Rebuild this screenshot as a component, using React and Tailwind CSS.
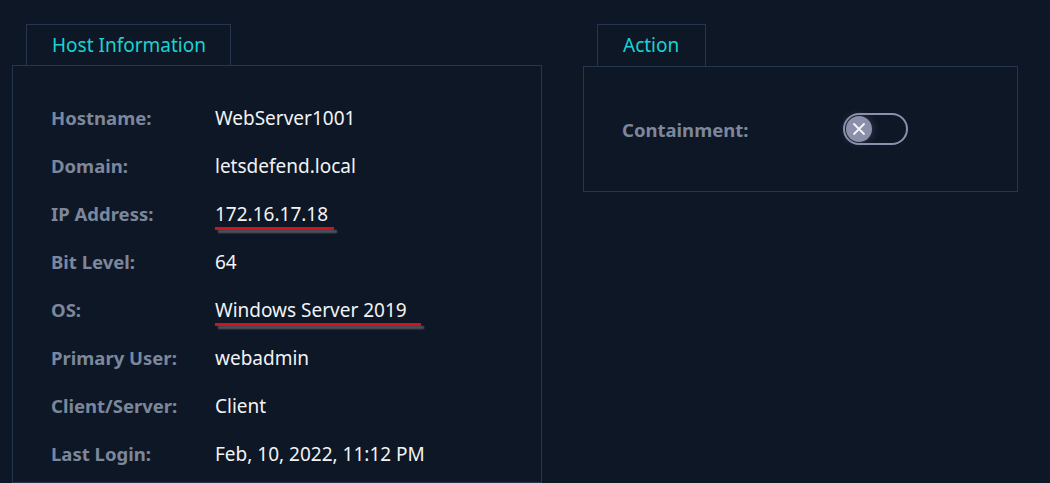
const rows = [
  { label: "Hostname:", value: "WebServer1001" },
  { label: "Domain:", value: "letsdefend.local" },
  { label: "IP Address:", value: "172.16.17.18", mark: "mr-[-6px]" },
  { label: "Bit Level:", value: "64" },
  { label: "OS:", value: "Windows Server 2019", mark: "mr-[-14px]" },
  { label: "Primary User:", value: "webadmin" },
  { label: "Client/Server:", value: "Client" },
  { label: "Last Login:", value: "Feb, 10, 2022, 11:12 PM" },
];

const Tab = ({ text, className }) => (
  <div
    className={`ml-[14px] -mb-px h-[43px] flex items-center border border-[#25354f] text-[#19d3d3] text-[19px] ${className}`}
  >
    {text}
  </div>
);

const Toggle = () => (
  <div className="w-[65px] h-[32px] rounded-full border-2 border-[#8c90ad] flex items-center pl-[1px]">
    <div className="w-[26px] h-[26px] rounded-full bg-[#8b8fa9] flex items-center justify-center shadow-[0_0_8px_rgba(140,144,170,0.35)]">
      <svg width="14" height="14" viewBox="0 0 14 14">
        <path
          d="M2 2L12 12M12 2L2 12"
          stroke="#f4f4f8"
          strokeWidth="1.8"
          strokeLinecap="round"
        />
      </svg>
    </div>
  </div>
);

export default function App() {
  return (
    <div
      className="w-[1050px] h-[483px] overflow-hidden bg-[#0e1726] flex gap-[41px] pl-[12px] pt-[24px]"
      style={{ fontFamily: '"Noto Sans", "Open Sans", sans-serif' }}
    >
      <div className="flex flex-col items-start">
        <Tab text="Host Information" className="w-[205px] pl-[25px]" />
        <div className="w-[530px] h-[430px] border border-[#25354f] pt-[30px] pl-[38px]">
          {rows.map((r) => (
            <div key={r.label} className="h-[48px] flex items-baseline pt-[10px]">
              <p className="w-[164px] text-[18.5px] leading-[24px] font-bold text-[#7c879c]">
                {r.label}
              </p>
              {r.mark ? (
                <div className="flex flex-col">
                  <p className="text-[19px] text-[#f2f3f5] leading-[24px]">
                    {r.value}
                  </p>
                  <div
                    className={`h-[3px] mt-[1px] bg-[#d3121b] shadow-[3px_3px_2px_rgba(110,110,115,0.75)] ${r.mark}`}
                  />
                </div>
              ) : (
                <p className="text-[19px] leading-[24px] text-[#f2f3f5]">{r.value}</p>
              )}
            </div>
          ))}
        </div>
      </div>
      <div className="flex flex-col items-start">
        <Tab text="Action" className="w-[109px] pl-[25px]" />
        <div className="w-[435px] h-[126px] border border-[#25354f] flex items-center pl-[38px]">
          <p className="w-[221px] text-[18.5px] font-bold text-[#7c879c] mt-[2px]">
            Containment:
          </p>
          <Toggle />
        </div>
      </div>
    </div>
  );
}
